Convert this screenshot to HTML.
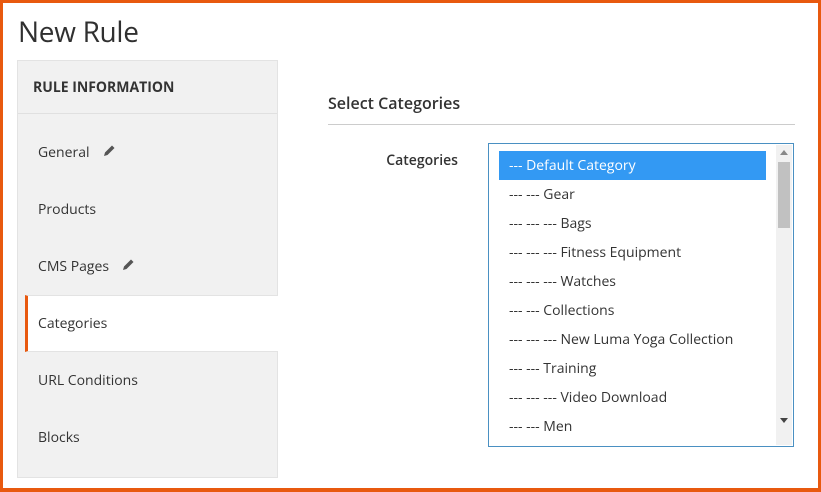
<!DOCTYPE html>
<html><head><style>
*{box-sizing:border-box;margin:0;padding:0}
body{width:821px;height:492px;background:#e8590f;font-family:"Open Sans","Liberation Sans",sans-serif;overflow:hidden}
.page{position:absolute;left:3px;top:3px;width:815px;height:485px;background:#fff}
h1{position:absolute;left:15px;top:10px;font-size:28px;font-weight:400;color:#303030;letter-spacing:-0.3px}
.side{position:absolute;left:14px;top:57px;width:261px;height:418px;background:#f1f1f1;border:1px solid #e3e3e3}
.head{height:53px;border-bottom:1px solid #e0e0e0;padding:17px 15px;font-weight:700;font-size:14px;color:#333;margin-bottom:10px}
.it{height:57px;padding:0 20px;line-height:57px;font-size:14px;color:#333}
.act{background:#fff;border-left:3px solid #e8590f;margin-left:7px;padding-left:10px;margin-right:-1px;border-top:1px solid #e3e3e3;border-bottom:1px solid #e3e3e3;line-height:55px}
.pen{display:inline-block;vertical-align:middle;margin-left:12px;margin-top:-4px}
.title{position:absolute;left:325px;top:89px;font-size:16px;font-weight:600;color:#333}
.line{position:absolute;left:325px;top:121px;width:467px;height:1px;background:#ccc}
.lab{position:absolute;left:370px;top:148px;width:85px;text-align:right;font-size:14px;font-weight:600;color:#333}
.sel{position:absolute;left:485px;top:140px;width:306px;height:304px;border:1px solid #4a90c2;overflow:hidden}
.opt{position:absolute;left:10px;height:29px;line-height:29px;font-size:14px;color:#333;padding-left:10px;width:267px}
.opt.s{background:#3399f3;color:#fff;left:10px;padding-left:10px}
.sb{position:absolute;right:1px;top:1px;width:16px;height:300px;background:#f1f1f1}
.th{position:absolute;left:2px;top:17px;width:12px;height:66px;background:#c1c1c1}
</style></head><body><div class="page">
<h1>New Rule</h1>
<div class="side">
<div class="head">RULE INFORMATION</div>
<div class="it">General<svg class="pen" width="14" height="14" viewBox="0 0 14 14"><path d="M2 12l1-3.5 7-7 2.5 2.5-7 7z" fill="#555"/></svg></div>
<div class="it">Products</div>
<div class="it">CMS Pages<svg class="pen" width="14" height="14" viewBox="0 0 14 14"><path d="M2 12l1-3.5 7-7 2.5 2.5-7 7z" fill="#555"/></svg></div>
<div class="it act">Categories</div>
<div class="it">URL Conditions</div>
<div class="it">Blocks</div>
</div>
<div class="title">Select Categories</div>
<div class="line"></div>
<div class="lab">Categories</div>
<div class="sel">
<div class="opt s" style="top:7px">--- Default Category</div>
<div class="opt" style="top:36px">--- --- Gear</div>
<div class="opt" style="top:65px">--- --- --- Bags</div>
<div class="opt" style="top:94px">--- --- --- Fitness Equipment</div>
<div class="opt" style="top:123px">--- --- --- Watches</div>
<div class="opt" style="top:152px">--- --- Collections</div>
<div class="opt" style="top:181px">--- --- --- New Luma Yoga Collection</div>
<div class="opt" style="top:210px">--- --- Training</div>
<div class="opt" style="top:239px">--- --- --- Video Download</div>
<div class="opt" style="top:268px">--- --- Men</div>
<div class="sb"><div class="th"></div>
<svg style="position:absolute;left:4px;top:5px" width="8" height="5"><path d="M0 5L4 0 8 5z" fill="#888"/></svg>
<svg style="position:absolute;left:4px;top:273px" width="8" height="5"><path d="M0 0L4 5 8 0z" fill="#444"/></svg>
</div>
</div>
</div></body></html>
